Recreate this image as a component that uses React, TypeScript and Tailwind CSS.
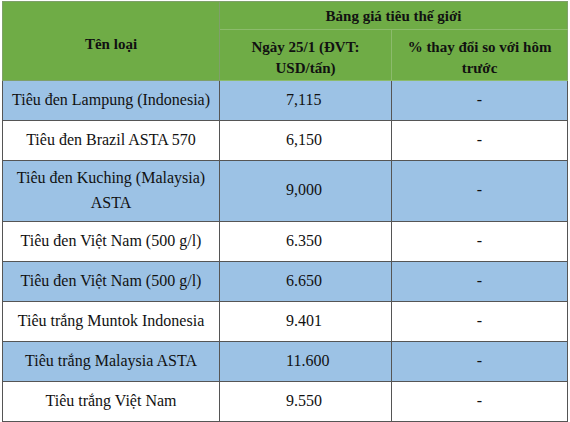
import React from 'react';

const rows: { name: string; price: string; change: string; blue: boolean; tall?: boolean }[] = [
  { name: 'Tiêu đen Lampung (Indonesia)', price: '7,115', change: '-', blue: true },
  { name: 'Tiêu đen Brazil ASTA 570', price: '6,150', change: '-', blue: false },
  { name: 'Tiêu đen Kuching (Malaysia) ASTA', price: '9,000', change: '-', blue: true, tall: true },
  { name: 'Tiêu đen Việt Nam (500 g/l)', price: '6.350', change: '-', blue: false },
  { name: 'Tiêu đen Việt Nam (500 g/l)', price: '6.650', change: '-', blue: true },
  { name: 'Tiêu trắng Muntok Indonesia', price: '9.401', change: '-', blue: false },
  { name: 'Tiêu trắng Malaysia ASTA', price: '11.600', change: '-', blue: true },
  { name: 'Tiêu trắng Việt Nam', price: '9.550', change: '-', blue: false },
];

export default function App() {
  return (
    <div className="w-[570px] h-[422px] overflow-hidden bg-white pl-[2px] pt-[1px] [font-family:'Liberation_Serif',serif] text-[#111]">
      <table className="w-[565px] border-collapse table-fixed">
        <colgroup>
          <col className="w-[217px]" />
          <col className="w-[172px]" />
          <col className="w-[176px]" />
        </colgroup>
        <thead>
          <tr className="h-[28px]">
            <th
              rowSpan={2}
              className="border border-[#7f9f6a] bg-[#6fac46] text-[15px] font-bold align-middle pt-[6px]"
            >
              Tên loại
            </th>
            <th
              colSpan={2}
              className="border border-[#8cbb6c] border-t-[#7f9f6a] border-r-[#7f9f6a] bg-[#6fac46] text-[15px] leading-[20px] font-bold align-middle"
            >
              Bảng giá tiêu thế giới
            </th>
          </tr>
          <tr className="h-[51px]">
            <th className="border border-[#8cbb6c] bg-[#6fac46] text-[15px] font-bold leading-[21px] px-[4px] pt-[6px] align-middle">
              Ngày 25/1 (ĐVT: USD/tấn)
            </th>
            <th className="border border-[#8cbb6c] border-r-[#7f9f6a] bg-[#6fac46] text-[15px] font-bold leading-[21px] px-[4px] pt-[6px] align-middle">
              % thay đổi so với hôm trước
            </th>
          </tr>
        </thead>
        <tbody>
          {rows.map((r, i) => (
            <tr key={i} className={r.blue ? 'bg-[#9cc2e5]' : 'bg-white'}>
              <td
                className={`border border-[#555] text-center align-middle text-[16px] leading-[25px] px-[6px] pb-[2px] ${
                  r.tall ? 'h-[61px]' : 'h-[40px]'
                }`}
              >
                {r.name}
              </td>
              <td className="border border-[#555] align-middle text-[16px] pl-[66px] pb-[2px]">{r.price}</td>
              <td className="border border-[#555] align-middle text-center text-[16px] pb-[2px]">{r.change}</td>
            </tr>
          ))}
        </tbody>
      </table>
    </div>
  );
}
